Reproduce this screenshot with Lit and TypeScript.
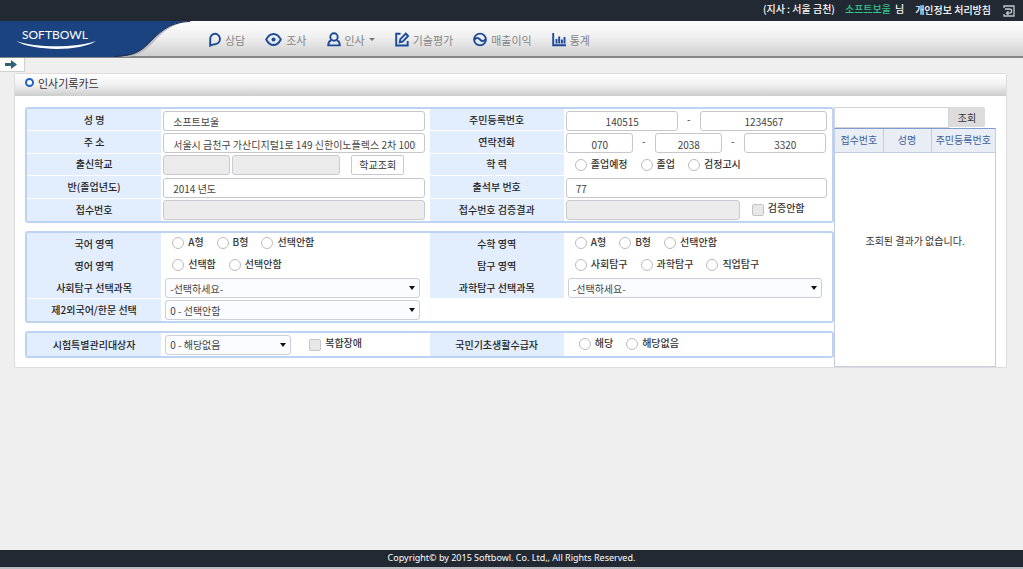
import { LitElement, html, css, svg, nothing } from "lit";
import { customElement, property } from "lit/decorators.js";
import { classMap } from "lit/directives/class-map.js";

const NAV = [
  { id: "talk", label: "상담" },
  { id: "eye", label: "조사" },
  { id: "user", label: "인사", menu: true },
  { id: "edit", label: "기술평가" },
  { id: "wave", label: "매출이익" },
  { id: "chart", label: "통계" },
];

const ICONS: Record<string, { w: number; body: unknown }> = {
  talk: {
    w: 12,
    body: svg`<path d="M1.2 13.6V7.2A4.9 5.2 0 1 1 6 12.2C4.6 12.2 3.2 12.6 1.2 13.6Z" />`,
  },
  eye: {
    w: 17,
    body: svg`<path d="M1.2 7.5C3 4 5.6 2 8.5 2S14 4 15.8 7.5C14 11 11.400 13 8.500 13S3 11 1.200 7.500Z" /><circle class="dot" cx="8.500" cy="7.500" r="2" />`,
  },
  user: {
    w: 14,
    body: svg`<circle cx="7" cy="5" r="3.700" /><path d="M4.300 8.200C2.200 9 1.200 10.500 1.200 13.400H12.800C12.800 10.500 11.800 9 9.700 8.200" />`,
  },
  edit: {
    w: 14,
    body: svg`<path d="M5.500 1.800H1.200V13.500H12.700V9" /><path d="M4.800 10.200L5.300 7.200L10.800 1.700L13.200 4L7.600 9.600Z" />`,
  },
  wave: {
    w: 14,
    body: svg`<circle cx="7" cy="7.500" r="5.900" /><path d="M1.400 7.600C3.500 5.300 5.200 5.500 7 7.500S10.500 9.700 12.600 7.400" />`,
  },
  chart: {
    w: 14,
    body: svg`<path d="M1.200 1V13.300H14" /><path d="M4.500 11.500V7M7.200 11.500V4.500M9.900 11.500V7.500M12.500 11.500V5" />`,
  },
};

const shared = css`
  * {
    box-sizing: border-box;
  }
  input,
  select,
  button {
    font: inherit;
    color: inherit;
    margin: 0;
  }
`;

@customElement("site-header")
class SiteHeader extends LitElement {
  static styles = [
    shared,
    css`
      :host {
        display: block;
      }
      a {
        color: inherit;
        text-decoration: none;
      }
      .top {
        display: flex;
        justify-content: flex-end;
        align-items: center;
        height: 21px;
        padding: 0 8px 3px 0;
        background: #222933;
        color: #fff;
        font-weight: 500;
      }
      .name {
        color: #2fc587;
        margin-left: 10px;
      }
      .honor {
        margin-left: 4px;
      }
      .policy {
        margin: 2px 12px 0 11px;
      }
      .exit {
        display: block;
        width: 12px;
        height: 12px;
        margin-top: 3px;
        padding: 0;
        border: 0;
        background: none;
      }
      .exit svg {
        display: block;
        fill: none;
        stroke: #c4c8cd;
        stroke-width: 1.3;
      }
      .bar {
        display: flex;
        height: 37px;
        border-bottom: 2px solid #858585;
        background: linear-gradient(#fdfdfd, #f0f0f0 45%, #cfcfcf);
      }
      .logo {
        flex: none;
        width: 198px;
        height: 36px;
      }
      .logo svg {
        display: block;
      }
      .wordmark {
        font-family: Lato, sans-serif;
        font-size: 12px;
        fill: #fff;
      }
      nav {
        display: flex;
        align-items: center;
        gap: 20px;
        padding: 2px 0 0 11px;
        color: #858585;
        font-size: 11px;
      }
      .item {
        display: flex;
        align-items: center;
        gap: 4px;
      }
      .item svg {
        display: block;
        fill: none;
        stroke: #1c4a9b;
        stroke-width: 1.9;
      }
      .item .dot {
        fill: #1c4a9b;
        stroke: none;
      }
      .caret {
        border: 3px solid transparent;
        border-top-color: #777;
        border-bottom: 0;
      }
    `,
  ];

  render() {
    return html`
      <header>
        <div class="top">
          <span>(지사 : 서울 금천)</span>
          <span class="name">소프트보울</span>
          <span class="honor">님</span>
          <a class="policy" href="#policy">개인정보 처리방침</a>
          <button class="exit" type="button" aria-label="로그아웃">
            <svg width="12" height="12" viewBox="0 0 12 12">
              <path d="M1 3V1H11V11H1V9" />
              <path d="M2 4H6.500A2 2 0 0 1 6.500 8.200H4M5.500 6.200L3.500 8.200L5.500 10" />
            </svg>
          </button>
        </div>
        <div class="bar">
          <a class="logo" href="#home" aria-label="SOFTBOWL">
            <svg width="198" height="36" viewBox="0 0 198 36">
              <path
                d="M0 0H192C170 2 160 14 151 24C142 33 134 36 122 36H0Z"
                fill="#b9bcc2"
              />
              <path
                d="M0 0H190C168 1 158 13 148 23C139 32 131 35 114 36H0Z"
                fill="#1b437f"
              />
              <path
                d="M190 0.500C168 1 158 13 148 23C139 32 131 35 114 35.500"
                fill="none"
                stroke="#1d2b48"
              />
              <text class="wordmark" x="22" y="18">SOFTBOWL</text>
              <path
                d="M16 20C36 27 76 27 96 20C80 31 32 30 16 20Z"
                fill="#fff"
              />
            </svg>
          </a>
          <nav>
            ${NAV.map(
              (n) => html`<a class="item" href="#${n.id}">
                <svg
                  width=${ICONS[n.id].w}
                  height="15"
                  viewBox="0 0 ${ICONS[n.id].w} 15"
                >
                  ${ICONS[n.id].body}
                </svg>
                <span>${n.label}</span>
                ${n.menu ? html`<span class="caret"></span>` : nothing}
              </a>`,
            )}
          </nav>
        </div>
      </header>
    `;
  }
}

@customElement("choice-group")
class ChoiceGroup extends LitElement {
  @property() name = "";
  @property() label = "";
  @property({ type: Array }) options: string[] = [];

  static styles = [
    shared,
    css`
      :host {
        display: block;
      }
      .group {
        display: flex;
        gap: 13px;
      }
      .option {
        display: flex;
        align-items: center;
        gap: 4px;
        font-weight: 500;
        white-space: nowrap;
      }
      .option span {
        padding-bottom: 2px;
      }
      input {
        appearance: none;
        width: 12px;
        height: 12px;
        margin: 0;
        border: 1px solid #bcbcbc;
        border-radius: 50%;
        background: #fff;
      }
      input:checked {
        background: radial-gradient(#1c4a9b 40%, #fff 45%);
      }
    `,
  ];

  render() {
    return html`<div class="group" role="radiogroup" aria-label=${this.label}>
      ${this.options.map(
        (o) => html`<label class="option">
          <input type="radio" name=${this.name} value=${o} /><span>${o}</span>
        </label>`,
      )}
    </div>`;
  }
}

@customElement("record-form")
class RecordForm extends LitElement {
  static styles = [
    shared,
    css`
      :host {
        display: block;
      }
      form {
        display: grid;
        gap: 8px;
      }
      .group {
        display: grid;
        grid-template-columns: 1fr 2fr 1fr 2fr;
        grid-auto-rows: 1fr;
        border: 2px solid #bcd3f1;
        border-radius: 3px;
      }
      .basic {
        min-height: 116px;
      }
      .exam {
        min-height: 92px;
      }
      .special {
        min-height: 27px;
      }
      .head {
        display: flex;
        align-items: center;
        justify-content: center;
        background: #e2edfd;
        color: #222;
        font-weight: 500;
        white-space: nowrap;
      }
      .lined {
        border-bottom: 1px solid #fff;
      }
      .cell {
        display: flex;
        align-items: center;
        min-width: 0;
        padding: 1px 5px 0 2px;
      }
      .cell.picks {
        padding: 0 0 0 11px;
      }
      .exam .cell.picks {
        padding-bottom: 2px;
      }
      .cell.wide {
        padding: 0 0 2px 15px;
      }
      .cell.drop {
        padding: 0 10px 0 4px;
      }
      .text {
        flex: 1 1 0;
        min-width: 0;
        height: 20px;
        padding: 2px 8px 0 9px;
        border: 1px solid #c6c6cc;
        border-radius: 3px;
        background: #fff;
        color: #444;
      }
      .text:disabled {
        background: #ebebeb;
        border-color: #c9c9cf;
      }
      .mid {
        text-align: center;
      }
      .w67 {
        flex: 0 1 67px;
      }
      .w82 {
        flex: 0 1 82px;
      }
      .w108 {
        flex: 0 1 108px;
      }
      .w112 {
        flex: 0 1 112px;
      }
      .w174 {
        flex: 0 1 174px;
      }
      .dash {
        flex: 0 0 22px;
        padding-bottom: 4px;
        text-align: center;
      }
      .school {
        gap: 2px;
      }
      .find {
        width: 53px;
        height: 20px;
        margin-left: 9px;
        padding: 0;
        border: 1px solid #c9c9cf;
        border-radius: 2px;
        background: #fff;
        color: #333;
        white-space: nowrap;
      }
      select {
        appearance: none;
        flex: 1 1 0;
        min-width: 0;
        height: 20px;
        padding: 1px 16px 0 4px;
        border: 1px solid #ccced8;
        border-radius: 3px;
        color: #444;
        background: #fbfcff;
      }
      .select {
        display: grid;
        flex: 1 1 0;
        grid-template-columns: 1fr;
        align-items: center;
      }
      .select select,
      .select .arrow {
        grid-area: 1 / 1;
      }
      .select .arrow {
        justify-self: end;
        margin-right: 5px;
        border: 3px solid transparent;
        border-top: 4px solid #111;
        border-bottom: 0;
        pointer-events: none;
      }
      .select.w126 {
        flex: 0 1 126px;
      }
      .check {
        display: flex;
        align-items: center;
        gap: 4px;
        font-weight: 500;
        white-space: nowrap;
      }
      .check span {
        padding-bottom: 4px;
      }
      .check input {
        appearance: none;
        width: 12px;
        height: 12px;
        border: 1px solid #c4c4c4;
        border-radius: 2px;
        background: #e8e8e8;
      }
      .near {
        margin-left: 12px;
      }
      .far {
        margin-left: 18px;
      }
    `,
  ];

  private head(text: string, lined = false, target = "") {
    const cls = classMap({ head: true, lined });
    return target
      ? html`<label class=${cls} for=${target}>${text}</label>`
      : html`<div class=${cls}>${text}</div>`;
  }

  private radios(name: string, label: string, options: string[], wide = false) {
    return html`<div class=${classMap({ cell: true, picks: true, wide })}>
      <choice-group name=${name} label=${label} .options=${options}></choice-group>
    </div>`;
  }

  private select(id: string, option: string, size = "") {
    return html`<span class="select ${size}">
      <select id=${id}>
        <option>${option}</option>
      </select>
      <span class="arrow"></span>
    </span>`;
  }

  render() {
    return html`
      <form>
        <div class="group basic">
          ${this.head("성 명", true, "name")}
          <div class="cell"><input class="text" id="name" value="소프트보울" /></div>
          ${this.head("주민등록번호", true, "rrn1")}
          <div class="cell">
            <input class="text mid w112" id="rrn1" value="140515" />
            <span class="dash">-</span>
            <input class="text mid" aria-label="주민등록번호 뒷자리" value="1234567" />
          </div>

          ${this.head("주 소", true, "addr")}
          <div class="cell">
            <input
              class="text"
              id="addr"
              value="서울시 금천구 가산디지털1로 149 신한이노플렉스 2차 1005호"
            />
          </div>
          ${this.head("연락전화", true, "tel1")}
          <div class="cell">
            <input class="text mid w67" id="tel1" value="070" />
            <span class="dash">-</span>
            <input class="text mid w67" aria-label="연락전화 가운데" value="2038" />
            <span class="dash">-</span>
            <input class="text mid w82" aria-label="연락전화 끝" value="3320" />
          </div>

          ${this.head("출신학교", true, "school")}
          <div class="cell school">
            <input class="text w67" id="school" disabled />
            <input class="text w108" aria-label="학교명" disabled />
            <button class="find" type="button">학교조회</button>
          </div>
          ${this.head("학 력", true)}
          ${this.radios("edu", "학력", ["졸업예정", "졸업", "검정고시"])}

          ${this.head("반(졸업년도)", true, "year")}
          <div class="cell"><input class="text" id="year" value="2014 년도" /></div>
          ${this.head("출석부 번호", true, "roll")}
          <div class="cell"><input class="text" id="roll" value="77" /></div>

          ${this.head("접수번호", false, "receipt")}
          <div class="cell"><input class="text" id="receipt" disabled /></div>
          ${this.head("접수번호 검증결과", false, "verify")}
          <div class="cell">
            <input class="text w174" id="verify" disabled />
            <label class="check near"><input type="checkbox" /><span>검증안함</span></label>
          </div>
        </div>

        <div class="group exam">
          ${this.head("국어 영역")}
          ${this.radios("kor", "국어 영역", ["A형", "B형", "선택안함"])}
          ${this.head("수학 영역")}
          ${this.radios("math", "수학 영역", ["A형", "B형", "선택안함"])}

          ${this.head("영어 영역")}
          ${this.radios("eng", "영어 영역", ["선택함", "선택안함"])}
          ${this.head("탐구 영역")}
          ${this.radios("inq", "탐구 영역", ["사회탐구", "과학탐구", "직업탐구"])}

          ${this.head("사회탐구 선택과목", true, "social")}
          <div class="cell drop">${this.select("social", "-선택하세요-")}</div>
          ${this.head("과학탐구 선택과목", true, "science")}
          <div class="cell drop">${this.select("science", "-선택하세요-")}</div>

          ${this.head("제2외국어/한문 선택", false, "second")}
          <div class="cell drop">${this.select("second", "0 - 선택안함")}</div>
        </div>

        <div class="group special">
          ${this.head("시험특별관리대상자", false, "care")}
          <div class="cell drop">
            ${this.select("care", "0 - 해당없음", "w126")}
            <label class="check far"><input type="checkbox" /><span>복합장애</span></label>
          </div>
          ${this.head("국민기초생활수급자")}
          ${this.radios("basic", "국민기초생활수급자", ["해당", "해당없음"], true)}
        </div>
      </form>
    `;
  }
}

@customElement("lookup-panel")
class LookupPanel extends LitElement {
  static styles = [
    shared,
    css`
      :host {
        display: flex;
        flex-direction: column;
      }
      .search {
        display: flex;
        padding-right: 11px;
      }
      .search input {
        flex: 1 1 0;
        min-width: 0;
        height: 21px;
        border: 1px solid #d4d4d8;
        background: #fff;
      }
      .search button {
        width: 36px;
        height: 20px;
        padding: 2px 0 0;
        border: 0;
        border-radius: 0 2px 2px 0;
        background: #dcdcdc;
        color: #333;
      }
      .results {
        flex: 1;
        border: 1px solid #c3cbe0;
        border-top: 1px solid #7f9bd0;
      }
      table {
        width: 100%;
        border-collapse: collapse;
        table-layout: fixed;
      }
      th {
        height: 23px;
        padding: 0;
        border-bottom: 1px solid #c3cbe0;
        border-left: 1px solid #c3cbe0;
        background: #e9eef6;
        color: #3f5f9c;
        font-weight: 400;
        white-space: nowrap;
      }
      th:first-child {
        border-left: 0;
      }
      .c1 {
        width: 30%;
      }
      .c2 {
        width: 30%;
      }
      td {
        padding: 81px 0 0;
        text-align: center;
        color: #333;
      }
    `,
  ];

  render() {
    return html`
      <div class="search">
        <input type="text" aria-label="검색어" /><button type="button">조회</button>
      </div>
      <div class="results">
        <table>
          <thead>
            <tr>
              <th class="c1">접수번호</th>
              <th class="c2">성명</th>
              <th>주민등록번호</th>
            </tr>
          </thead>
          <tbody>
            <tr>
              <td colspan="3">조회된 결과가 없습니다.</td>
            </tr>
          </tbody>
        </table>
      </div>
    `;
  }
}

@customElement("app-root")
class AppRoot extends LitElement {
  static styles = [
    shared,
    css`
      :host {
        display: flex;
        flex-direction: column;
        min-height: 100vh;
        background: #efefef;
        font: 10px/14px "Noto Sans CJK KR", sans-serif;
        color: #333;
      }
      main {
        flex: 1;
      }
      .toggle {
        display: flex;
        align-items: center;
        justify-content: center;
        width: 25px;
        height: 14px;
        padding: 0 2px 0 0;
        border: 1px solid #d0d0d0;
        border-width: 0 1px 1px 0;
        background: #fff;
      }
      .card {
        margin: 1px 16px 0 14px;
        border: 1px solid #dcdcdc;
        border-radius: 2px;
        background: #fff;
      }
      .title {
        display: flex;
        align-items: center;
        gap: 4px;
        height: 22px;
        margin: 0;
        padding: 0 0 5px 10px;
        background: linear-gradient(#fff, #f0f0f0 50%, #cdcdcd);
        color: #333;
        font-size: 11px;
        font-weight: 400;
      }
      .ring {
        width: 9px;
        height: 9px;
        border: 2px solid #1f5fc4;
        border-radius: 50%;
        background: #fff;
      }
      .body {
        display: grid;
        grid-template-columns: minmax(0, 5fr) minmax(0, 1fr);
        padding: 11px 10px 0 10px;
      }
      record-form {
        padding-bottom: 9px;
      }
      footer {
        height: 19px;
        padding-bottom: 3px;
        border-bottom: 2px solid #b9bcc0;
        background: #222933;
        color: #fff;
        font: 9px/15px "Noto Sans", "Noto Sans CJK KR", sans-serif;
        text-align: center;
      }
    `,
  ];

  render() {
    return html`
      <site-header></site-header>
      <main>
        <button class="toggle" type="button" aria-label="메뉴 열기">
          <svg width="12" height="9" viewBox="0 0 12 9">
            <path d="M0 3H6V0L12 4.500L6 9V6H0Z" fill="#2f6273" />
          </svg>
        </button>
        <section class="card">
          <h1 class="title"><span class="ring"></span>인사기록카드</h1>
          <div class="body">
            <record-form></record-form>
            <lookup-panel></lookup-panel>
          </div>
        </section>
      </main>
      <footer>Copyright© by 2015 Softbowl. Co. Ltd,, All Rights Reserved.</footer>
    `;
  }
}
